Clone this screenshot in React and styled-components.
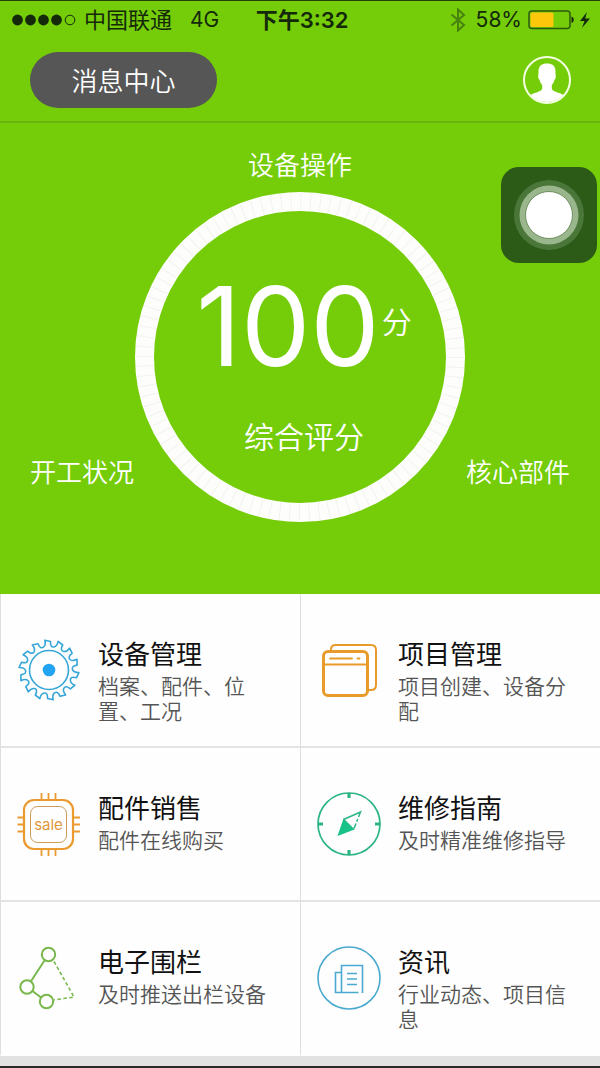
import React from 'react'
import styled, { createGlobalStyle } from 'styled-components'

const GlobalStyle = createGlobalStyle`
  * {
    box-sizing: border-box;
  }
  body {
    margin: 0;
    background: #e2e2e2;
    font-family: Inter, 'Noto Sans CJK SC', sans-serif;
  }
`

const Page = styled.div`
  position: relative;
  border-top: 1px solid #23420c;
  border-bottom: 2px solid #2a2a26;
`

const Top = styled.div`
  background: #75cd09;
  color: #fff;
`

const StatusBar = styled.div`
  display: grid;
  grid-template-columns: 1fr auto 1fr;
  align-items: center;
  height: 38px;
  padding: 0 8px 0 12px;
  font-size: 22px;
  line-height: 38px;
  color: #14290a;
`

const StatusGroup = styled.div`
  display: flex;
  align-items: center;
  justify-content: ${props => props.end ? 'flex-end' : 'flex-start'};
  gap: ${props => props.end ? '6px' : '8px'};
  white-space: nowrap;
`

const Network = styled.span`
  margin-left: 10px;
  font-size: 21px;
`

const Percent = styled.span`
  margin-left: 4px;
  font-size: 21px;
`

const Time = styled.span`
  font-weight: 600;
`

const Header = styled.header`
  display: flex;
  align-items: center;
  justify-content: space-between;
  height: 84px;
  padding: 0 28px 0 30px;
  border-bottom: 2px solid #67b50c;
`

const MessageButton = styled.button`
  width: 187px;
  height: 56px;
  padding: 0 0 2px;
  border: none;
  border-radius: 28px;
  background: #565656;
  color: #fff;
  font-family: inherit;
  font-size: 26px;
  font-weight: 350;
  cursor: pointer;
`

const AvatarButton = styled.button`
  display: flex;
  padding: 0;
  border: none;
  background: none;
  cursor: pointer;
`

const Score = styled.section`
  display: grid;
  grid-template-columns: 1fr auto 1fr;
  padding: 25px 30px 72px;
`

const ScoreLabel = styled.span`
  align-self: end;
  justify-self: ${props => props.align || 'center'};
  grid-column: ${props => props.wide ? '1 / -1' : 'auto'};
  padding-bottom: ${props => props.wide ? '8px' : '31px'};
  font-size: 26px;
  font-weight: 350;
  line-height: 36px;
  white-space: nowrap;
`

const Gauge = styled.div`
  display: grid;
  width: 330px;
  margin: 0 -30px;

  > * {
    grid-area: 1 / 1;
  }
`

const GaugeText = styled.div`
  display: flex;
  flex-direction: column;
  align-items: center;
  padding: 74px 0 0 8px;
  font-size: 30px;
  font-weight: 350;
`

const Points = styled.div`
  display: flex;
  align-items: center;
  gap: 2px;
  line-height: 112px;
`

const Number = styled.strong`
  font-size: 110px;
  font-weight: 400;
`

const Unit = styled.span`
  padding-bottom: 8px;
`

const Caption = styled.span`
  margin-top: 31px;
  line-height: 40px;
`

const Grid = styled.nav`
  display: grid;
  grid-template-columns: 1fr 1fr;
  margin-bottom: 10px;
  background: #fefefe;
`

const Cell = styled.a`
  display: flex;
  align-items: center;
  gap: 17px;
  min-height: 154px;
  padding-left: 16px;
  border-left: 1px solid #dedede;
  border-bottom: 2px solid #e4e4e4;
  color: #111;
  text-decoration: none;

  &:nth-last-child(-n + 2) {
    border-bottom-color: transparent;
  }

  svg {
    flex: none;
  }
`

const CellText = styled.div`
  align-self: flex-start;
  padding: 43px 30px 20px 0;
`

const Title = styled.div`
  font-size: 26px;
  line-height: 36px;
`

const Desc = styled.div`
  margin-top: 1px;
  font-size: 21px;
  font-weight: 350;
  line-height: 25px;
  color: #555;
`

const TouchButton = styled.button`
  position: absolute;
  top: 166px;
  right: 3px;
  display: flex;
  padding: 0;
  border: none;
  border-radius: 18px;
  background: #2b5b17;
  cursor: pointer;
`

const Signal = () => (
  <svg width="64" height="12" viewBox="0 0 64 12" aria-hidden="true">
    {[6, 19, 32, 45].map(x => <circle key={x} cx={x - 0.5} cy="6" r="5.4" fill="#14290a" />)}
    <circle cx="58" cy="6" r="4.8" fill="none" stroke="#14290a" />
  </svg>
)

const Bluetooth = () => (
  <svg width="16" height="24" viewBox="0 0 16 24" fill="none" stroke="#47820f" strokeWidth="2" aria-hidden="true">
    <path d="M1.5 6.5 14 17l-6 5.500V1.500L14 7 1.500 17.500" />
  </svg>
)

const Battery = () => (
  <svg width="64" height="20" viewBox="0 0 64 20" aria-hidden="true">
    <rect x="1" y="1" width="41" height="17.500" rx="3" fill="none" stroke="#2c5a0c" strokeWidth="1.500" />
    <rect x="2.500" y="2.500" width="23" height="14.500" rx="1.500" fill="#fdc70c" />
    <path d="M43.500 6.500c3 .5 3 6 0 6.500z" fill="#14290a" />
    <path d="M59 2 52 11h4.500L54 18l8-9.500h-4.800z" fill="#14290a" />
  </svg>
)

const Avatar = () => (
  <svg width="50" height="50" viewBox="0 0 50 50" aria-hidden="true">
    <circle cx="25" cy="25" r="23" fill="none" stroke="#f4ffe4" strokeWidth="2" />
    <path
      d="M25 8.500c5.500 0 9 2.500 8.500 9.500l.3 3.500c0 2-.8 2.800-1.300 3.200-.5 2.300-1.500 4-2.700 5.300v3.500c0 3 8 4 11.700 6.500A23 23 0 0 1 8.500 40c3.700-2.500 11.700-3.500 11.700-6.500V30c-1.200-1.300-2.200-3-2.700-5.300-.5-.4-1.300-1.200-1.300-3.200l.3-3.500C16 11 19.500 8.500 25 8.500z"
      fill="#fff"
    />
  </svg>
)

const Ring = () => (
  <svg viewBox="0 0 330 330" fill="none" aria-hidden="true">
    <circle cx="165" cy="165" r="155.500" stroke="#fdfdfc" strokeWidth="19" />
    <circle cx="165" cy="165" r="155.500" stroke="#f1f3ee" strokeWidth="17" strokeDasharray="1 8.770" />
  </svg>
)

const Touch = () => (
  <svg width="96" height="96" viewBox="0 0 96 96" aria-hidden="true">
    <circle cx="48" cy="48" r="35" fill="#4b7639" />
    <circle cx="48" cy="48" r="29.500" fill="#9ab68c" />
    <circle cx="48" cy="48" r="23.500" fill="#fff" stroke="#6f8f60" />
  </svg>
)

const polar = (radius, degrees) => {
  const a = degrees * Math.PI / 180
  return `${(32 + radius * Math.sin(a)).toFixed(2)} ${(32 - radius * Math.cos(a)).toFixed(2)}`
}

// each tooth: sharp tip, sloping back, rounded gullet up to the next tip
const TEETH = 14
const teeth = Array.from({ length: TEETH }, (_, i) => {
  const a = i * 360 / TEETH - 8
  return `${i ? 'L' : 'M'}${polar(30, a)}L${polar(28.5, a + 11)}Q${polar(22.5, a + 11)} ${polar(23.5, a + 20)}Q${polar(25, a + 27)} ${polar(30, a + 25.7)}`
}).join('') + 'Z'

const Saw = () => (
  <svg width="64" height="64" viewBox="0 0 64 64" fill="none" stroke="#36a6d8" strokeWidth="1.600" strokeLinejoin="round" aria-hidden="true">
    <path d={teeth} />
    <circle cx="32" cy="32" r="19.500" />
    <circle cx="32" cy="32" r="6.300" fill="#22a4f2" stroke="none" />
  </svg>
)

const Windows = () => (
  <svg width="64" height="64" viewBox="0 0 64 64" fill="none" stroke="#e89a2b" aria-hidden="true">
    <path d="M14 12.500v-1q0-4.500 4.500-4.500h35.500q5 0 5 5v35q0 5-5 5h-3" strokeWidth="2" />
    <rect x="6.500" y="13.500" width="44" height="44" rx="4.500" strokeWidth="3" />
    <path d="M7 26.500h43" strokeWidth="2.200" />
    <path d="M13 20.500h22M40.500 20.500h2" strokeWidth="1.800" strokeLinecap="round" />
  </svg>
)

const Sale = () => (
  <svg width="64" height="64" viewBox="0 0 64 64" fill="none" stroke="#eb9a2f" aria-hidden="true">
    <rect x="7" y="8" width="49" height="49" rx="10" strokeWidth="2.200" />
    <rect x="13.500" y="14.500" width="36" height="36" rx="7" strokeWidth="1" stroke="#cf9a55" />
    <path
      d="M24.500 1v6M31.500 1v6M38.500 1v6M24.500 58v6M31.500 58v6M38.500 58v6M.5 25.500h6M.5 32.500h6M.5 39.500h6M57 25.500h6M57 32.500h6M57 39.500h6"
      strokeWidth="1.800"
    />
    <text x="31.500" y="37.500" textAnchor="middle" fontFamily="Inter, sans-serif" fontSize="15" fill="#e0983f" stroke="none">sale</text>
  </svg>
)

const Compass = () => (
  <svg width="64" height="64" viewBox="0 0 64 64" fill="none" stroke="#2bb583" aria-hidden="true">
    <circle cx="32" cy="32" r="31" strokeWidth="1.700" />
    <path d="M32 1v5M32 58v5M1 32h5M58 32h5" strokeWidth="3.200" />
    <path d="M26.500 27.500 43.500 20 37 36.500" strokeWidth="1.500" strokeDasharray="18 0 6 2 3 2 20" />
    <path d="M26.500 26.500 37.500 37.500 20.500 44z" fill="#18c188" stroke="none" />
    <path d="M26.500 27 37 37.500" strokeWidth="1" />
  </svg>
)

const Fence = () => (
  <svg width="64" height="64" viewBox="0 0 64 64" fill="none" stroke="#78b84c" strokeWidth="2" aria-hidden="true">
    <circle cx="31.500" cy="8.500" r="6.700" />
    <circle cx="10" cy="41" r="6.700" />
    <circle cx="29.500" cy="55.500" r="6.700" />
    <path d="M27.500 14.500 13.800 35.500M15.500 45l8.500 6.500" />
    <path d="M37 15.500 57 51l-20.500 3" strokeWidth="1.600" strokeDasharray="3.500 2.500" />
  </svg>
)

const News = () => (
  <svg width="64" height="64" viewBox="0 0 64 64" fill="none" stroke="#4aa9cf" strokeWidth="1.600" aria-hidden="true">
    <circle cx="32" cy="32" r="31" />
    <path d="M24.500 46.500V19.500h21V47M41.500 46.500H18.500V26.500h5.500M30 27.500h10M30 33h10M30 38.500h10" />
  </svg>
)

const items = [
  { title: '设备管理', desc: '档案、配件、位置、工况', Icon: Saw },
  { title: '项目管理', desc: '项目创建、设备分配', Icon: Windows },
  { title: '配件销售', desc: '配件在线购买', Icon: Sale },
  { title: '维修指南', desc: '及时精准维修指导', Icon: Compass },
  { title: '电子围栏', desc: '及时推送出栏设备', Icon: Fence },
  { title: '资讯', desc: '行业动态、项目信息', Icon: News },
]

const App = () => {
  return (
    <>
      <GlobalStyle />
      <Page>
        <Top>
          <StatusBar>
            <StatusGroup>
              <Signal />
              <span>中国联通</span>
              <Network>4G</Network>
            </StatusGroup>
            <Time>下午3:32</Time>
            <StatusGroup end>
              <Bluetooth />
              <Percent>58%</Percent>
              <Battery />
            </StatusGroup>
          </StatusBar>
          <Header>
            <MessageButton>消息中心</MessageButton>
            <AvatarButton aria-label="我的">
              <Avatar />
            </AvatarButton>
          </Header>
          <Score>
            <ScoreLabel wide>设备操作</ScoreLabel>
            <ScoreLabel align="start">开工状况</ScoreLabel>
            <Gauge>
              <Ring />
              <GaugeText>
                <Points>
                  <Number>100</Number>
                  <Unit>分</Unit>
                </Points>
                <Caption>综合评分</Caption>
              </GaugeText>
            </Gauge>
            <ScoreLabel align="end">核心部件</ScoreLabel>
          </Score>
        </Top>
        <Grid>
          {items.map(({ title, desc, Icon }) => (
            <Cell href="#" key={title}>
              <Icon />
              <CellText>
                <Title>{title}</Title>
                <Desc>{desc}</Desc>
              </CellText>
            </Cell>
          ))}
        </Grid>
        <TouchButton aria-label="辅助触控">
          <Touch />
        </TouchButton>
      </Page>
    </>
  )
}

export default App
